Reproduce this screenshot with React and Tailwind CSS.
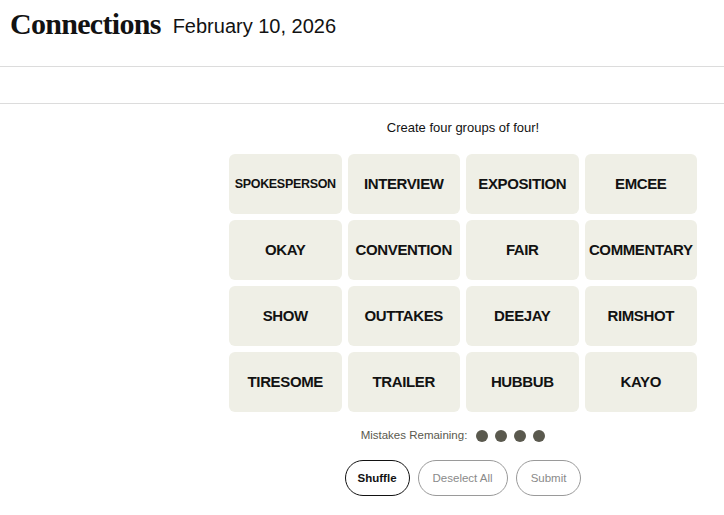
import React from 'react';

const words = [
  'SPOKESPERSON', 'INTERVIEW', 'EXPOSITION', 'EMCEE',
  'OKAY', 'CONVENTION', 'FAIR', 'COMMENTARY',
  'SHOW', 'OUTTAKES', 'DEEJAY', 'RIMSHOT',
  'TIRESOME', 'TRAILER', 'HUBBUB', 'KAYO',
];

const Tile = ({ word }) => (
  <div
    className={`h-[60px] rounded-md bg-[#efefe6] flex items-center justify-center font-bold text-[#121212] tracking-tight ${
      word.length > 10 ? 'text-[12.5px]' : 'text-[15px]'
    }`}
  >
    {word}
  </div>
);

export default function App() {
  return (
    <div className="w-[724px] h-[515px] bg-white overflow-hidden font-['Liberation_Sans',Arial,sans-serif] text-[#121212]">
      {/* header */}
      <div className="h-[67px] flex items-center gap-[12px] px-[10px] border-b border-[#dcdcdc]">
        <h1 className="font-['Liberation_Serif',serif] font-bold text-[30px] tracking-[-0.7px] leading-none -mt-[18px]">
          Connections
        </h1>
        <span className="text-[20px] leading-none -mt-[15px]">February 10, 2026</span>
      </div>
      <div className="h-[37px] border-b border-[#dcdcdc]" />

      {/* board */}
      <div className="pl-[229px] w-[697px] pt-[16px]">
        <p className="text-center text-[13px] leading-[16px]">Create four groups of four!</p>
        <div className="grid grid-cols-4 gap-[6px] mt-[18px]">
          {words.map((w) => (
            <Tile key={w} word={w} />
          ))}
        </div>

        <div className="flex items-center justify-center mt-[15px] gap-[9px] pr-[20px]">
          <span className="text-[11.5px] text-[#5a594e]">Mistakes Remaining:</span>
          <div className="flex gap-[7px]">
            {[0, 1, 2, 3].map((i) => (
              <span key={i} className="w-[12px] h-[12px] rounded-full bg-[#5a594e]" />
            ))}
          </div>
        </div>

        <div className="flex justify-center gap-[8px] mt-[16px]">
          <button className="h-[36px] px-[12px] rounded-full border border-[#121212] text-[11.5px] font-semibold">
            Shuffle
          </button>
          <button className="h-[36px] px-[14px] rounded-full border border-[#9a9a9a] text-[11.5px] font-medium text-[#8a8a8a]">
            Deselect All
          </button>
          <button className="h-[36px] px-[14px] rounded-full border border-[#9a9a9a] text-[11.5px] font-medium text-[#8a8a8a]">
            Submit
          </button>
        </div>
      </div>
    </div>
  );
}
